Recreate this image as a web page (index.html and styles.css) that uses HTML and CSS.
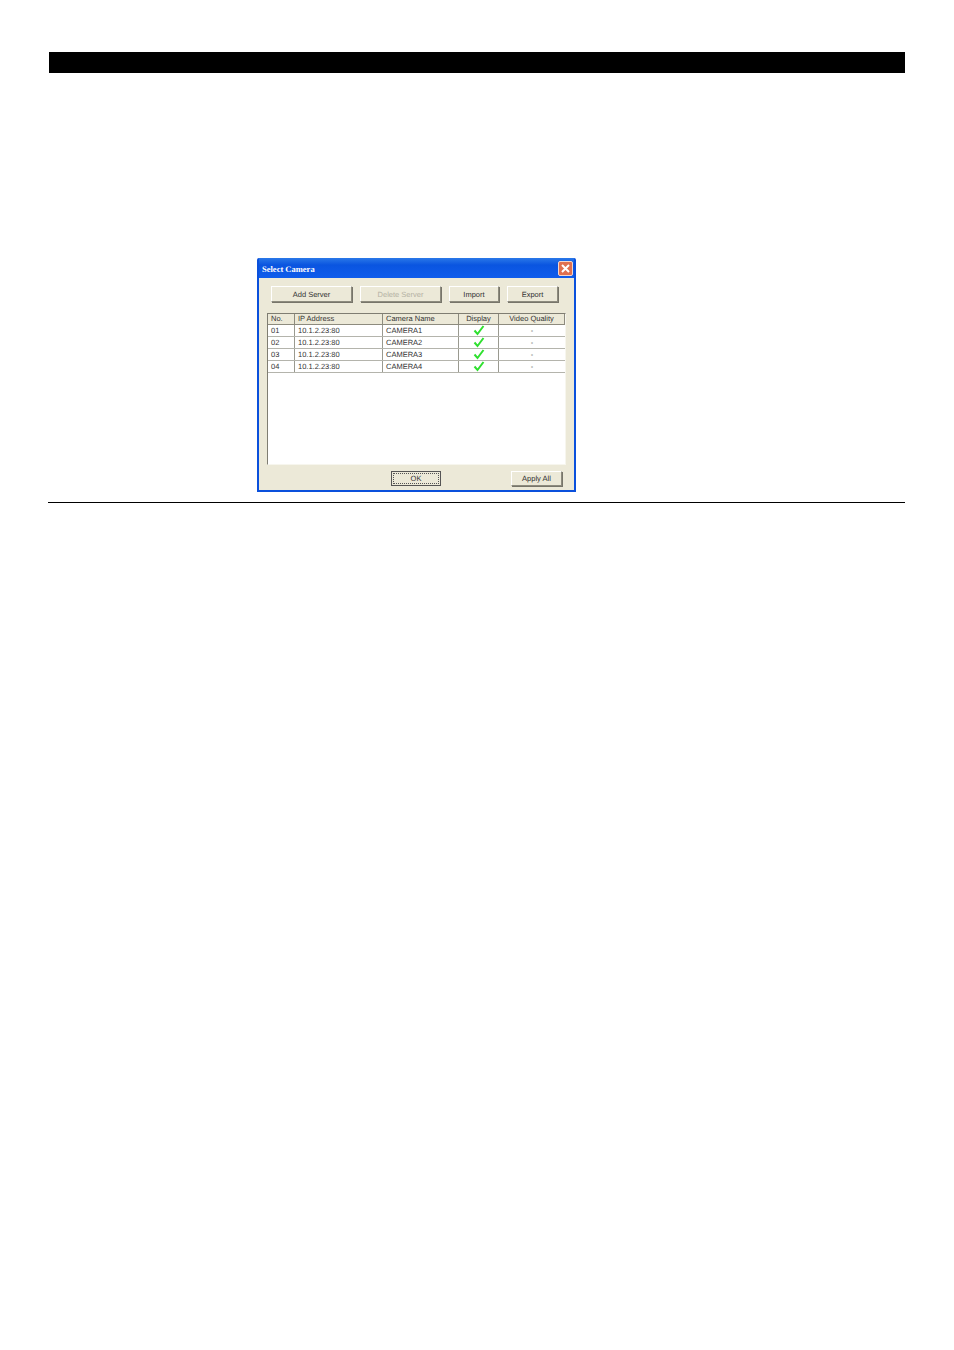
FILE: index.html
```html
<!DOCTYPE html>
<html lang="en">
<head>
  <meta charset="UTF-8" />
  <meta name="viewport" content="width=device-width,initial-scale=1.0" />
  <title>Select Camera</title>
  <link rel="stylesheet" href="styles.css">
</head>
<body>

  <!-- Section heading bar -->
  <div class="heading-bar"></div>

  <!-- Screenshot of the dialog -->
  <div class="dialog">
    <div class="title-bar">
      <span class="title-text">Select Camera</span>
      <span class="close-btn">
        <svg width="13" height="13" viewBox="0 0 13 13"><path d="M3 3l7 7M10 3l-7 7" stroke="#fff" stroke-width="2" fill="none"/></svg>
      </span>
    </div>
    <div class="dialog-body">
      <div class="top-buttons">
        <button class="btn btn-add">Add Server</button>
        <button class="btn btn-delete" disabled>Delete Server</button>
        <button class="btn btn-import">Import</button>
        <button class="btn btn-export">Export</button>
      </div>

      <div class="list">
        <div class="row head">
          <div>No.</div>
          <div>IP Address</div>
          <div>Camera Name</div>
          <div class="center">Display</div>
          <div class="center">Video Quality</div>
        </div>
        <div class="row">
          <div>01</div>
          <div>10.1.2.23:80</div>
          <div>CAMERA1</div>
          <div class="center"><svg class="tick" viewBox="0 0 12 12"><path d="M1.5 6.5l3 3.5L10.5 2" fill="none" stroke="#2fe02f" stroke-width="2"/></svg></div>
          <div class="center">-</div>
        </div>
        <div class="row">
          <div>02</div>
          <div>10.1.2.23:80</div>
          <div>CAMERA2</div>
          <div class="center"><svg class="tick" viewBox="0 0 12 12"><path d="M1.5 6.5l3 3.5L10.5 2" fill="none" stroke="#2fe02f" stroke-width="2"/></svg></div>
          <div class="center">-</div>
        </div>
        <div class="row">
          <div>03</div>
          <div>10.1.2.23:80</div>
          <div>CAMERA3</div>
          <div class="center"><svg class="tick" viewBox="0 0 12 12"><path d="M1.5 6.5l3 3.5L10.5 2" fill="none" stroke="#2fe02f" stroke-width="2"/></svg></div>
          <div class="center">-</div>
        </div>
        <div class="row">
          <div>04</div>
          <div>10.1.2.23:80</div>
          <div>CAMERA4</div>
          <div class="center"><svg class="tick" viewBox="0 0 12 12"><path d="M1.5 6.5l3 3.5L10.5 2" fill="none" stroke="#2fe02f" stroke-width="2"/></svg></div>
          <div class="center">-</div>
        </div>
      </div>

      <div class="bottom-buttons">
        <button class="btn btn-ok">OK</button>
        <button class="btn btn-apply">Apply All</button>
      </div>
    </div>
  </div>

  <!-- Rule under the section -->
  <div class="rule"></div>

</body>
</html>
```

FILE: styles.css
```css
html {
  background: #fff;
}
body {
  font-family: "Liberation Sans", Arial, sans-serif;
  background: #fff;
  color: #333;
  margin: 0;
  padding: 52px 49px 0 48px;
  min-height: 1298px;
  text-rendering: geometricPrecision;
}
.heading-bar {
  height: 21px;
  margin-left: 1px;
  background: #000;
}
.dialog {
  width: 319px;
  height: 234px;
  box-sizing: border-box;
  margin: 185px 0 0 209px;
  display: flex;
  flex-direction: column;
  background: #0a50dc;
  padding: 0 2px 2px;
  border-radius: 2px 2px 0 0;
}
.title-bar {
  height: 20px;
  flex: none;
  display: flex;
  align-items: center;
  justify-content: space-between;
  padding: 1px 1px 0 3px;
  box-sizing: border-box;
  background: linear-gradient(#2a78e8, #0a55e0 35%, #0f5cec);
}
.title-text {
  color: #fff;
  font-family: "Liberation Serif", serif;
  font-weight: bold;
  font-size: 8.5px;
}
.close-btn {
  width: 13px;
  height: 13px;
  display: flex;
  background: #e0704f;
  border: 1px solid #f3d6cc;
  border-radius: 2px;
}
.dialog-body {
  flex: 1;
  background: #ece9d8;
  position: relative;
  padding: 8px 8px 0;
  display: flex;
  flex-direction: column;
}
.btn {
  font-family: "Liberation Sans", Arial, sans-serif;
  font-size: 7.5px;
  text-rendering: geometricPrecision;
  color: #333;
  background: #ece9d8;
  padding: 0;
  border: 1px solid;
  border-color: #fff #8d8b7e #8d8b7e #fff;
  box-shadow: 1px 1px 0 #77756a;
  border-radius: 0;
}
.btn:disabled {
  color: #b5b2a4;
}
.top-buttons {
  display: flex;
  height: 16px;
  padding-left: 4px;
}
.btn-add {
  width: 81px;
}
.btn-delete {
  width: 81px;
  margin-left: 8px;
}
.btn-import {
  width: 50px;
  margin-left: 8px;
}
.btn-export {
  width: 51px;
  margin-left: 8px;
}
.list {
  margin-top: 11px;
  height: 152px;
  box-sizing: border-box;
  background: #fff;
  border-left: 1px solid #7f7d72;
  border-top: 1px solid #7f7d72;
  border-right: 1px solid #f7f6ee;
  border-bottom: 1px solid #f7f6ee;
}
.row {
  display: grid;
  grid-template-columns: 27px 88px 76px 40px 1fr;
  height: 12.2px;
  box-sizing: border-box;
  font-size: 7.5px;
  line-height: 11px;
  border-bottom: 1px solid #b4b4ac;
}
.row > div {
  padding-left: 3px;
  border-right: 1px solid #9a9a90;
  overflow: hidden;
  white-space: nowrap;
}
.row > div:last-child {
  border-right: none;
}
.row .center {
  padding-left: 0;
  text-align: center;
}
.row.head {
  height: 10.5px;
  line-height: 10px;
  background: #ece9d8;
  border-bottom: 1px solid #8d8b7e;
}
.row.head > div {
  border-right: 1px solid #8d8b7e;
}
.tick {
  width: 12px;
  height: 12px;
  display: inline-block;
  vertical-align: top;
  margin-top: -1px;
}
.bottom-buttons {
  display: flex;
  height: 15px;
  margin-top: 6px;
  padding-left: 124px;
}
.btn-ok {
  width: 50px;
  outline: 1px dotted #555;
  outline-offset: -3px;
  border-color: #555;
  box-shadow: none;
}
.btn-apply {
  width: 51px;
  margin-left: 70px;
}
.rule {
  height: 1px;
  margin-top: 10px;
  background: #000;
}
```
